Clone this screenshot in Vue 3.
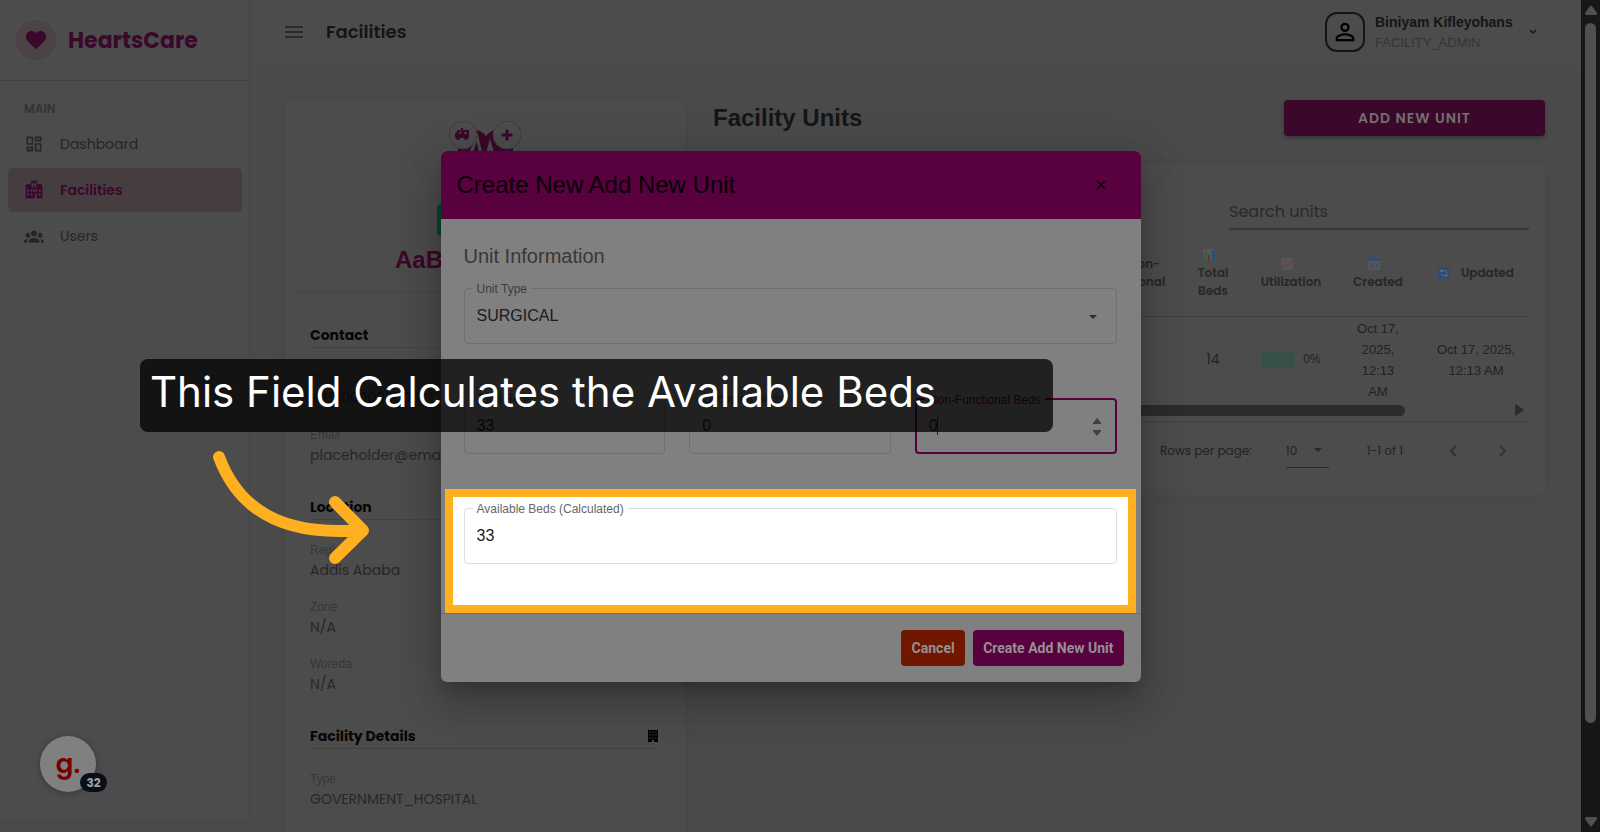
<script setup>
import { ref, computed } from 'vue'

const menu = [
  { id: 'dashboard', label: 'Dashboard' },
  { id: 'facilities', label: 'Facilities', active: true },
  { id: 'users', label: 'Users' },
]

const sections = [
  {
    title: 'Contact',
    items: [
      { label: 'Phone', value: '+251000000000' },
      { label: 'Email', value: 'placeholder@email.com' },
    ],
  },
  {
    title: 'Location',
    items: [
      { label: 'Region', value: 'Addis Ababa' },
      { label: 'Zone', value: 'N/A' },
      { label: 'Woreda', value: 'N/A' },
    ],
  },
  {
    title: 'Facility Details',
    icon: true,
    items: [
      { label: 'Type', value: 'GOVERNMENT_HOSPITAL' },
      { label: 'Level', value: 'N/A' },
    ],
  },
]

const unitType = ref('SURGICAL')
const totalBeds = ref(33)
const occupiedBeds = ref(0)
const nonFunctionalBeds = ref(0)
const search = ref('')
const perPage = ref(10)

const availableBeds = computed(
  () => totalBeds.value - occupiedBeds.value - nonFunctionalBeds.value,
)
</script>

<template>
  <div class="app">
    <aside class="sidebar">
      <div class="brand">
        <span class="brand__mark">
          <svg width="24" height="24" viewBox="0 0 24 24">
            <path d="M12 21.3l-1.4-1.3C5.4 15.400 2 12.300 2 8.500 2 5.400 4.400 3 7.500 3c1.700 0 3.400.8 4.500 2.100C13.100 3.800 14.800 3 16.500 3 19.600 3 22 5.400 22 8.500c0 3.800-3.400 6.900-8.600 11.500z" />
          </svg>
        </span>
        <span class="brand__name">HeartsCare</span>
      </div>
      <nav class="nav" aria-label="Main">
        <p class="nav__title">MAIN</p>
        <a
          v-for="item in menu"
          :key="item.id"
          href="#"
          class="nav__item"
          :class="{ 'nav__item--active': item.active }"
        >
          <svg width="20" height="20" viewBox="0 0 24 24">
            <path v-if="item.id === 'dashboard'" d="M19 5v2h-4V5h4M9 5v6H5V5h4m10 8v6h-4v-6h4M9 17v2H5v-2h4M21 3h-8v6h8V3zM11 3H3v10h8V3zm10 8h-8v10h8V11zm-10 4H3v6h8v-6z" />
            <path v-else-if="item.id === 'facilities'" d="M18 14h2v-3h-2v3m-14 0h2v-3H4v3m0 5h2v-3H4v3m14 0h2v-3h-2v3m-7-5h2v-3h-2v3M2 22V7c0-1 .5-2 2-2h4V3c0-1 .5-2 2-2h4c1 0 2 .5 2 2v2h4c1 0 2 .5 2 2v15h-7v-4h-2v4zM9 3v6h2V7h2v2h2V3h-2v2h-2V3zM8 14h2v-3H8zm6 0h2v-3h-2zM8 19h2v-3H8zm6-1h2v-2h-2z" fill-rule="evenodd" />
            <path v-else d="M12 5.500A3.500 3.500 0 0 1 15.500 9a3.500 3.500 0 0 1-3.500 3.500A3.500 3.500 0 0 1 8.500 9 3.500 3.500 0 0 1 12 5.500M5 8c.56 0 1.080.15 1.530.42-.15 1.430.27 2.850 1.130 3.960C7.160 13.340 6.160 14 5 14a3 3 0 0 1-3-3 3 3 0 0 1 3-3m14 0a3 3 0 0 1 3 3 3 3 0 0 1-3 3c-1.160 0-2.160-.66-2.660-1.620a5.540 5.540 0 0 0 1.130-3.960C17.920 8.150 18.440 8 19 8M5.500 18.250c0-2.070 2.910-3.750 6.500-3.750s6.500 1.680 6.500 3.750V20h-13zM0 20v-1.500c0-1.390 1.890-2.560 4.450-2.900-.59.68-.95 1.620-.95 2.650V20zm24 0h-3.500v-1.750c0-1.030-.36-1.970-.95-2.650 2.560.34 4.450 1.510 4.450 2.900z" />
          </svg>
          <span>{{ item.label }}</span>
        </a>
      </nav>
    </aside>

    <div class="main">
      <header class="topbar">
        <button class="icon-btn topbar__menu" type="button" aria-label="Toggle menu">
          <svg width="18" height="12" viewBox="0 0 18 12">
            <path d="M0 0h18v2H0zM0 5h18v2H0zM0 10h18v2H0z" />
          </svg>
        </button>
        <h1 class="topbar__title">Facilities</h1>
        <button class="user" type="button">
          <span class="user__avatar">
            <svg width="28" height="28" viewBox="0 0 24 24">
              <path d="M12 4a4 4 0 1 1 0 8 4 4 0 0 1 0-8m0 1.900a2.100 2.100 0 1 0 0 4.200 2.100 2.100 0 0 0 0-4.200M12 13c2.670 0 8 1.340 8 4v3H4v-3c0-2.660 5.330-4 8-4m0 1.900c-2.970 0-6.100 1.460-6.100 2.100v1.100h12.200V17c0-.64-3.130-2.100-6.100-2.100" />
            </svg>
          </span>
          <span class="user__text">
            <span class="user__name">Biniyam Kifleyohans</span>
            <span class="user__role">FACILITY_ADMIN</span>
          </span>
          <svg class="user__caret" width="8" height="6" viewBox="0 0 8 6">
            <path d="M1 1l3 3 3-3" />
          </svg>
        </button>
      </header>

      <div class="content">
        <section class="card profile">
          <svg class="profile__logo" width="74" height="74" viewBox="0 0 74 74">
            <path class="fill" d="M10 22L24 10q8-3 14 5 6-8 14-5l13 12v14L38 66 10 38z" />
            <path class="pulse" d="M10 40h10l9-24 7 30 6-23 5 17h18" />
            <circle cx="15" cy="14" r="14" />
            <circle cx="59" cy="14" r="14" />
            <path class="fill" d="M7 13l3-4h3V7h2v2h6v8h-1a2 2 0 0 1-4 0h-4a2 2 0 0 1-4 0H7z" />
            <path class="hole" d="M10 12h3v-2M16 12h3M17.500 10.500v3" />
            <path class="fill" d="M57.500 8.500h3v4h4v3h-4v4h-3v-4h-4v-3h4z" />
          </svg>
          <span class="profile__status">ACTIVE</span>
          <h2 class="profile__name">AaBET Hospital</h2>
          <div class="profile__details">
            <section v-for="section in sections" :key="section.title" class="details">
              <h3 class="details__title">
                {{ section.title }}
                <svg v-if="section.icon" width="10" height="12" viewBox="0 0 10 12">
                  <path d="M0 0h10v12H6v-2H4v2H0z" />
                  <path class="panes" d="M1 2h2M4 2h2M7 2h2M1 5h2M4 5h2M7 5h2M1 8h2M4 8h2M7 8h2" />
                </svg>
              </h3>
              <dl class="details__list">
                <div v-for="item in section.items" :key="item.label" class="details__row">
                  <dt>{{ item.label }}</dt>
                  <dd>{{ item.value }}</dd>
                </div>
              </dl>
            </section>
          </div>
        </section>

        <section class="units">
          <div class="units__head">
            <h2>Facility Units</h2>
            <button class="units__add" type="button">ADD NEW UNIT</button>
          </div>

          <div class="card units__card">
            <input
              v-model="search"
              class="units__search"
              type="text"
              placeholder="Search units"
              aria-label="Search units"
            >
            <table class="table">
              <thead>
                <tr>
                  <th>Unit Type</th>
                  <th>Occupied</th>
                  <th class="col-nf">
                    <svg class="emoji" width="12" height="12" viewBox="0 0 12 12">
                      <path fill="#5a5030" d="M6 1l6 10H0z" />
                    </svg>
                    Non-Functional
                  </th>
                  <th class="col-total">
                    <svg class="emoji" width="12" height="12" viewBox="0 0 12 12">
                      <path fill="#555759" d="M0 0h12v12H0z" />
                      <path fill="#3f5d40" d="M1 3h3v9H1z" />
                      <path fill="#72293c" d="M5 6h2v6H5z" />
                      <path fill="#304f6c" d="M9 1h3v11H9z" />
                    </svg>
                    Total Beds
                  </th>
                  <th class="col-util">
                    <svg class="emoji" width="12" height="12" viewBox="0 0 12 12">
                      <path fill="#575558" d="M0 0h12v12H0z" />
                      <path fill="none" stroke="#71333f" d="M0 10l4-4 2 2 6-6" />
                    </svg>
                    Utilization
                  </th>
                  <th class="col-created">
                    <svg class="emoji" width="12" height="12" viewBox="0 0 12 12">
                      <path fill="#55575e" d="M0 0h12v12H0z" />
                      <path fill="#304f70" d="M0 0h12v3H0z" />
                      <path stroke="#47435c" d="M3 5v5M6 5v5M9 5v5" />
                    </svg>
                    Created
                  </th>
                  <th class="col-updated">
                    <svg class="emoji" width="12" height="12" viewBox="0 0 12 12">
                      <rect fill="#304c70" width="12" height="12" rx="1" />
                      <path fill="none" stroke="#697480" d="M3 5V3l2 1.500M3 4.500c2-2 5-1 6 1.500M9 7v2L7 8M9 8c-2 2-5 1-6-1.500" />
                    </svg>
                    Updated
                  </th>
                </tr>
              </thead>
              <tbody>
                <tr>
                  <td>EMERGENCY</td>
                  <td>0</td>
                  <td>0</td>
                  <td class="table__number">14</td>
                  <td>
                    <span class="usage"><span class="usage__bar" />0%</span>
                  </td>
                  <td class="table__created">Oct 17, 2025, 12:13 AM</td>
                  <td>Oct 17, 2025, 12:13 AM</td>
                </tr>
              </tbody>
            </table>
            <div class="hscroll">
              <span class="hscroll__thumb" />
              <svg width="9" height="12" viewBox="0 0 9 12"><path d="M0 1q0-1 1-1l8 6-8 6q-1 0-1-1z" /></svg>
            </div>
            <div class="pager">
              <label for="per-page">Rows per page:</label>
              <span class="pager__select">
                <select id="per-page" v-model="perPage">
                  <option :value="10">10</option>
                  <option :value="25">25</option>
                </select>
                <svg width="8" height="4" viewBox="0 0 8 4"><path d="M0 0h8L4 4z" /></svg>
              </span>
              <span class="pager__range">1-1 of 1</span>
              <button class="icon-btn" type="button" aria-label="Previous page" disabled>
                <svg width="8" height="12" viewBox="0 0 8 12"><path d="M7 1L2 6l5 5" /></svg>
              </button>
              <button class="icon-btn" type="button" aria-label="Next page" disabled>
                <svg width="8" height="12" viewBox="0 0 8 12"><path d="M1 1l5 5-5 5" /></svg>
              </button>
            </div>
          </div>
        </section>
      </div>
    </div>

    <div class="scrollbar">
      <svg width="12" height="10" viewBox="0 0 12 10"><path d="M5 1q1-1 2 0l5 7q0 2-1 2H1q-1 0-1-2z" /></svg>
      <span class="scrollbar__track"><span class="scrollbar__thumb" /></span>
      <svg width="12" height="10" viewBox="0 0 12 10"><path d="M5 9q1 1 2 0l5-7q0-2-1-2H1q-1 0-1 2z" /></svg>
    </div>

    <div class="overlay">
      <form class="dialog" role="dialog" aria-labelledby="dialog-title" @submit.prevent>
        <header class="dialog__header">
          <h2 id="dialog-title">Create New Add New Unit</h2>
          <button class="icon-btn" type="button" aria-label="Close">
            <svg width="10" height="10" viewBox="0 0 10 10"><path d="M1 1l8 8M9 1l-8 8" /></svg>
          </button>
        </header>

        <div class="dialog__body">
          <h3>Unit Information</h3>
          <div class="field">
            <label for="unit-type">Unit Type</label>
            <select id="unit-type" v-model="unitType">
              <option>SURGICAL</option>
              <option>EMERGENCY</option>
            </select>
            <svg class="field__arrow" width="8" height="4" viewBox="0 0 8 4"><path d="M0 0h8L4 4z" /></svg>
          </div>
          <div class="dialog__row">
            <div class="field">
              <label for="total-beds">Total Beds</label>
              <input id="total-beds" v-model="totalBeds" type="number">
            </div>
            <div class="field">
              <label for="occupied-beds">Occupied Beds</label>
              <input id="occupied-beds" v-model="occupiedBeds" type="number">
            </div>
            <div class="field field--focused">
              <label for="nf-beds">Non-Functional Beds</label>
              <input id="nf-beds" v-model="nonFunctionalBeds" type="number">
              <span class="field__caret" />
              <svg class="field__spin" width="8" height="18" viewBox="0 0 8 18">
                <path d="M4 0l4 5v1H0V5zM0 12h8v1l-4 5-4-5z" />
              </svg>
            </div>
          </div>
        </div>

        <div class="highlight">
          <div class="field">
            <label for="available-beds">Available Beds (Calculated)</label>
            <input id="available-beds" :value="availableBeds" type="number" readonly>
          </div>
        </div>

        <footer class="dialog__footer">
          <button class="btn btn--danger" type="button">Cancel</button>
          <button class="btn" type="submit">Create Add New Unit</button>
        </footer>
      </form>
    </div>

    <p class="caption">This Field Calculates the Available Beds</p>
    <svg class="arrow" width="170" height="130" viewBox="205 440 170 130">
      <path d="M219 457C238 508 280 537 361 530M335 502l28 28.500L335 558" />
    </svg>
    <button class="guide" type="button" aria-label="Open guide">
      g.
      <span class="guide__count">32</span>
    </button>
  </div>
</template>

<style>
body {
  margin: 0;
  background: #4a4a4a;
}
</style>

<style scoped>
.app,
.app * {
  box-sizing: border-box;
}

.app {
  position: relative;
  display: flex;
  height: 100vh;
  overflow: hidden;
  background: #4a4a4a;
  color: #222;
  font-family: Poppins, Inter, sans-serif;
  font-size: 14px;
}

h1,
h2,
h3,
p,
dl,
dd {
  margin: 0;
}

button,
input,
select {
  margin: 0;
  padding: 0;
  border: 0;
  background: none;
  color: inherit;
  font: inherit;
}

.icon-btn {
  display: flex;
  align-items: center;
  justify-content: center;
}

/* sidebar */
.sidebar {
  flex: 0 0 250px;
  height: calc(100% - 12px);
  background: #4c4c4c;
  border-right: 1px solid #434343;
}

.brand {
  display: flex;
  align-items: center;
  gap: 12px;
  height: 81px;
  padding: 0 16px;
  border-bottom: 1px solid #434343;
  color: #3b072b;
}

.brand__mark {
  display: flex;
  align-items: center;
  justify-content: center;
  width: 40px;
  height: 40px;
  border-radius: 50%;
  background: #4c4345;
}

.brand__mark svg,
.nav__item svg {
  fill: currentColor;
}

.brand__name {
  font-size: 22px;
  font-weight: 700;
}

.nav {
  padding: 18px 7px 18px 8px;
}

.nav__title {
  padding: 0 16px;
  font-size: 12px;
  font-weight: 600;
  line-height: 20px;
  color: #333;
  margin-bottom: 3px;
}

.nav__item {
  display: flex;
  align-items: center;
  gap: 16px;
  height: 44px;
  margin-bottom: 2px;
  padding: 0 16px;
  border-radius: 5px;
  color: #262626;
  text-decoration: none;
}

.nav__item--active {
  background: #453d3f;
  color: #3b072b;
  font-weight: 600;
}

/* main */
.main {
  flex: 1;
  min-width: 0;
}

.topbar {
  display: flex;
  align-items: center;
  height: 65px;
  padding: 0 44px 2px 35px;
  background: #4c4c4c;
}

.topbar__menu svg {
  fill: #2c2c2f;
}

.topbar__title {
  flex: 1;
  margin-left: 23px;
  font-size: 18px;
  font-weight: 600;
  color: #151515;
}

.user {
  display: flex;
  align-items: center;
  gap: 10px;
  font-family: "Liberation Sans", Arial, sans-serif;
  text-align: left;
}

.user__avatar {
  display: flex;
  align-items: center;
  justify-content: center;
  width: 40px;
  height: 40px;
  border: 2px solid #151515;
  border-radius: 12px;
}

.user__text {
  display: flex;
  flex-direction: column;
  width: 144px;
}

.user__name {
  font-weight: 700;
  line-height: 22px;
  color: #151515;
}

.user__role {
  font-size: 13px;
  line-height: 20px;
  color: #353535;
}

.user__caret path {
  fill: none;
  stroke: #151515;
  stroke-width: 1.5;
}

.content {
  display: grid;
  grid-template-columns: 400px minmax(0, 1fr);
  align-items: start;
  gap: 28px;
  padding: 35px 36px 0 35px;
}

.card {
  border-radius: 6px;
  background: #4c4c4c;
  box-shadow: 0 0 10px rgb(0 0 0 / 0.06);
}

.profile {
  display: flex;
  flex-direction: column;
  align-items: center;
  padding: 21px 10px;
}

.profile__logo {
  margin-bottom: 9px;
}

.profile__logo .fill {
  fill: #3b072b;
}

.profile__logo .pulse,
.profile__logo .hole {
  fill: none;
  stroke: #4c4c4c;
  stroke-width: 3;
}

.profile__logo .hole {
  stroke-width: 1;
}

.profile__logo circle {
  fill: #4c4c4c;
  stroke: #443941;
  stroke-width: 1;
}

.profile__status {
  width: 96px;
  border-radius: 4px;
  background: #04482a;
  line-height: 32px;
  text-align: center;
  font-size: 12px;
}

.profile__name {
  width: 100%;
  padding: 8px 0 16px;
  border-bottom: 1px solid #444;
  color: #3b072b;
  font-family: "Liberation Sans", Arial, sans-serif;
  font-size: 24px;
  line-height: 32px;
  text-align: center;
}

.profile__details {
  width: 100%;
  padding: 30px 15px 0;
}

.details {
  margin-bottom: 13px;
}

.details__title {
  display: flex;
  align-items: center;
  justify-content: space-between;
  height: 25px;
  margin-bottom: 20px;
  border-bottom: 1px solid #434343;
  color: #060606;
  font-size: 14px;
  font-weight: 700;
}

.details__title svg {
  margin-right: 2px;
}

.details__title .panes {
  stroke: #30343a;
}

.details__row {
  padding-bottom: 16px;
}

.details__row dt {
  color: #363636;
  font-family: "Liberation Sans", Arial, sans-serif;
  font-size: 12px;
  line-height: 20px;
}

.details__row dd {
  color: #272727;
  line-height: 21px;
}

/* units */
.units__head {
  display: flex;
  justify-content: space-between;
  margin-bottom: 28px;
}

.units__head h2 {
  font-family: "Liberation Sans", Arial, sans-serif;
  font-size: 24px;
  line-height: 36px;
  color: #151515;
}

.units__add {
  width: 261px;
  height: 36px;
  border-radius: 4px;
  background: #3b072b;
  box-shadow: 0 2px 4px rgb(0 0 0 / 0.3);
  color: #707070;
  font-weight: 600;
  letter-spacing: 1px;
}

.units__card {
  padding: 16px;
}

.units__search {
  display: block;
  width: 300px;
  height: 50px;
  margin-left: auto;
  padding-top: 14px;
  border-bottom: 2px solid #373737;
  font-size: 16px;
}

.units__search::placeholder {
  color: #2a2a2a;
  opacity: 1;
}

.table {
  width: 100%;
  border-collapse: collapse;
  table-layout: fixed;
  text-align: center;
}

.table th {
  height: 86px;
  padding: 0 8px;
  border-bottom: 1px solid #3f3f3f;
  font-size: 12px;
  font-weight: 600;
  line-height: 18px;
  color: #272727;
}

.table td {
  height: 87px;
  padding: 0 12px;
  font-family: "Liberation Sans", Arial, sans-serif;
  font-size: 13px;
  line-height: 21px;
}

.table .table__number {
  font-family: inherit;
  font-size: 14px;
}

.table .table__created {
  padding: 0 20px;
}

.col-nf {
  width: 88px;
}

.table .col-total {
  width: 72px;
  padding: 0 18px;
}

.col-util {
  width: 84px;
}

.table .col-created {
  width: 90px;
  padding: 0 16px;
}

.table .col-updated {
  width: 106px;
  padding: 0;
}

.emoji {
  margin-right: 8px;
  vertical-align: middle;
}

.usage {
  display: flex;
  align-items: center;
  justify-content: center;
  gap: 8px;
  font-size: 12px;
}

.usage__bar {
  flex: 0 0 34px;
  height: 16px;
  border-radius: 4px;
  background: #37504a;
}

.hscroll {
  display: flex;
  align-items: center;
  justify-content: space-between;
  height: 19px;
  padding: 0 5px 4px 0;
  border-bottom: 1px solid #414141;
}

.hscroll svg {
  fill: #2c2c2c;
}

.hscroll__thumb {
  width: 85%;
  height: 11px;
  border-radius: 6px;
  background: #2c2c2c;
}

.pager {
  display: flex;
  align-items: center;
  justify-content: flex-end;
  height: 57px;
  padding-right: 1px;
  font-size: 12px;
}

.pager__select {
  display: flex;
  align-items: center;
  width: 43px;
  height: 35px;
  margin: 0 38px 0 34px;
  border-bottom: 1px solid #2c2c2c;
}

.pager__select svg {
  fill: #2a2a2a;
}

.pager__select select {
  width: 28px;
  appearance: none;
}

.pager .icon-btn {
  width: 50px;
}

.pager__range {
  margin-right: 25px;
}

.pager .icon-btn path {
  fill: none;
  stroke: #333;
  stroke-width: 2;
}

/* page scrollbar */
.scrollbar {
  flex: 0 0 19px;
  display: flex;
  flex-direction: column;
  align-items: center;
  gap: 8px;
  padding: 5px 0;
  background: #171717;
}

.scrollbar svg {
  flex: none;
  fill: #505050;
}

.scrollbar__track {
  flex: 1;
}

.scrollbar__thumb {
  display: block;
  width: 11px;
  height: 89%;
  border-radius: 6px;
  background: #505050;
}

/* dialog */
.overlay {
  position: absolute;
  inset: 0 19px 0 0;
  display: flex;
  align-items: center;
  justify-content: center;
  font-family: "Liberation Sans", Arial, sans-serif;
}

.dialog {
  width: 700px;
  border-radius: 6px;
  background: #808080;
  box-shadow:
    0 11px 15px -7px rgb(0 0 0 / 0.2),
    0 24px 38px 3px rgb(0 0 0 / 0.14),
    0 9px 46px 8px rgb(0 0 0 / 0.12);
}

.dialog__header {
  display: flex;
  align-items: center;
  justify-content: space-between;
  height: 68px;
  padding: 0 35px 0 16px;
  border-radius: 6px 6px 0 0;
  background: #59003f;
  color: #080006;
}

.dialog__header h2 {
  font-size: 24px;
  font-weight: 400;
}

.dialog__header path {
  fill: none;
  stroke: #080006;
  stroke-width: 1.3;
}

.dialog__body {
  padding: 23px 24px 35px 23px;
}

.dialog__body h3 {
  margin-bottom: 18px;
  color: #373737;
  font-size: 20px;
  font-weight: 400;
  line-height: 28px;
}

.dialog__row {
  display: grid;
  grid-template-columns: repeat(3, minmax(0, 1fr));
  gap: 24px;
  margin-top: 54px;
}

.field {
  position: relative;
  height: 56px;
  border: 1px solid #6f6f6f;
  border-radius: 4px;
}

.field label {
  position: absolute;
  top: -8px;
  left: 8px;
  padding: 0 4px;
  background: #808080;
  color: #3d3d3d;
  font-size: 12px;
  line-height: 16px;
  white-space: nowrap;
}

.field input,
.field select {
  display: block;
  width: 100%;
  height: 100%;
  padding: 0 12px;
  outline: 0;
  appearance: none;
  color: #1a1a1a;
  font-size: 16px;
}

.field input {
  appearance: textfield;
}

.field input::-webkit-inner-spin-button {
  appearance: none;
}

.field__arrow {
  position: absolute;
  top: 26px;
  right: 19px;
  fill: #303030;
}

.field--focused {
  border: 2px solid #59003f;
}

.field--focused label {
  color: #59003f;
}

.field__caret {
  position: absolute;
  top: 17px;
  left: 20px;
  width: 1px;
  height: 18px;
  background: #59003f;
}

.field__spin {
  position: absolute;
  top: 18px;
  right: 14px;
  fill: #404040;
}

.highlight {
  margin: 0 5px 0 4px;
  padding: 11px 11px 41px;
  border: 8px solid #ffb020;
  background: #fff;
}

.highlight .field {
  border-color: #dedede;
}

.highlight .field label {
  background: #fff;
  color: #666;
}

.dialog__footer {
  display: flex;
  justify-content: flex-end;
  gap: 8px;
  padding: 16px 17px 16px 16px;
  border-top: 1px solid #707070;
}

.btn {
  min-width: 64px;
  height: 36px;
  padding: 0 10px;
  border-radius: 4px;
  background: #59003f;
  color: #969096;
  font-family: Roboto, sans-serif;
  font-weight: 700;
}

.btn--danger {
  background: #701700;
}

/* guide layer */
.caption {
  position: absolute;
  top: 359px;
  left: 140px;
  width: 913px;
  padding: 0 10px 7px;
  border-radius: 8px;
  background: rgb(0 0 0 / 0.74);
  color: #fff;
  font-family: Inter, sans-serif;
  font-size: 42px;
  line-height: 66px;
  white-space: nowrap;
}

.arrow {
  position: absolute;
  top: 440px;
  left: 205px;
}

.arrow path {
  fill: none;
  stroke: #ffb020;
  stroke-width: 12;
  stroke-linecap: round;
  stroke-linejoin: round;
}

.guide {
  position: absolute;
  bottom: 40px;
  left: 40px;
  width: 56px;
  height: 56px;
  border-radius: 50%;
  background: #808080;
  box-shadow: 0 1px 6px rgb(0 0 0 / 0.3);
  color: #750000;
  font-size: 26px;
  font-weight: 600;
  line-height: 44px;
}

.guide__count {
  position: absolute;
  right: -11px;
  bottom: 0;
  width: 27px;
  border-radius: 10px;
  background: #090f1a;
  color: #a0a0a0;
  font-size: 12px;
  font-weight: 700;
  line-height: 19px;
}
</style>
